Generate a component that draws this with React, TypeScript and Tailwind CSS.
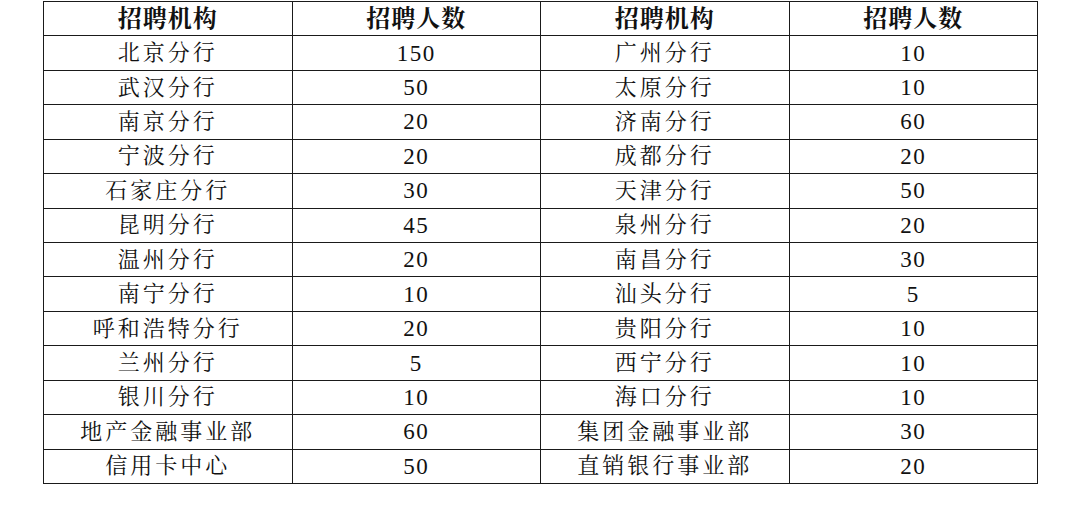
import React from 'react';

const rows: [string, string, string, string][] = [
  ['北京分行', '150', '广州分行', '10'],
  ['武汉分行', '50', '太原分行', '10'],
  ['南京分行', '20', '济南分行', '60'],
  ['宁波分行', '20', '成都分行', '20'],
  ['石家庄分行', '30', '天津分行', '50'],
  ['昆明分行', '45', '泉州分行', '20'],
  ['温州分行', '20', '南昌分行', '30'],
  ['南宁分行', '10', '汕头分行', '5'],
  ['呼和浩特分行', '20', '贵阳分行', '10'],
  ['兰州分行', '5', '西宁分行', '10'],
  ['银川分行', '10', '海口分行', '10'],
  ['地产金融事业部', '60', '集团金融事业部', '30'],
  ['信用卡中心', '50', '直销银行事业部', '20'],
];

const font = {
  fontFamily: '"Liberation Serif", "Noto Serif CJK SC", "Noto Sans CJK SC", serif',
};

export default function App() {
  return (
    <div className="w-[1080px] h-[513px] bg-white pt-px pl-[43px]" style={font}>
      <table className="w-[995px] table-fixed border-collapse text-[#111]">
        <thead>
          <tr className="h-[34.4px]">
            {['招聘机构', '招聘人数', '招聘机构', '招聘人数'].map((h, i) => (
              <th
                key={i}
                className="border border-[#1a1a1a] p-0 text-center text-[24px] font-bold leading-none tracking-[1px]"
              >
                {h}
              </th>
            ))}
          </tr>
        </thead>
        <tbody>
          {rows.map((r, i) => (
            <tr key={i} className="h-[34.45px]">
              <td className="border border-[#1a1a1a] p-0 text-center text-[22px] leading-none tracking-[3px]">{r[0]}</td>
              <td className="border border-[#1a1a1a] p-0 text-center text-[23px] leading-none tracking-[1.5px]">{r[1]}</td>
              <td className="border border-[#1a1a1a] p-0 text-center text-[22px] leading-none tracking-[3px]">{r[2]}</td>
              <td className="border border-[#1a1a1a] p-0 text-center text-[23px] leading-none tracking-[1.5px]">{r[3]}</td>
            </tr>
          ))}
        </tbody>
      </table>
    </div>
  );
}
